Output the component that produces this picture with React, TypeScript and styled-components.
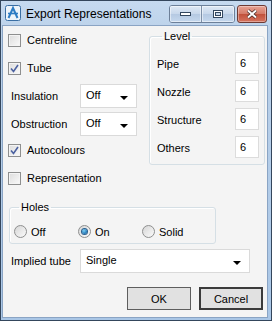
import * as React from 'react'
import styled, { createGlobalStyle } from 'styled-components'

const Global = createGlobalStyle`
  html, body {
    margin: 0;
    padding: 0;
    background: #ffffff;
  }
  * {
    box-sizing: border-box;
  }
`

// window frame
const Window = styled.div`
  width: 272px;
  height: 321px;
  border: 1px solid #34465c;
  background: linear-gradient(#c6daf0, #bcd2ea 30px, #a9c6e6);
  display: flex;
  flex-direction: column;
  font-family: "Liberation Sans", Arial, sans-serif;
  font-size: 11px;
  color: #000;
`

const TitleBar = styled.div`
  height: 24px;
  display: flex;
  align-items: center;
  padding: 0 4px 0 4px;
`

const TitleText = styled.div`
  font-size: 12px;
  margin-left: 5px;
  flex: 1;
  color: #000;
  padding-top: 1px;
`

const CaptionGroup = styled.div`
  display: flex;
  align-self: flex-start;
  margin-top: 4px;
  gap: 2px;
`

const CaptionPair = styled.div`
  display: flex;
  border: 1px solid #6d8099;
  border-radius: 3px;
  overflow: hidden;
  height: 18px;
`

const CaptionButton = styled.div<{ $w: number; $sep?: boolean }>`
  width: ${(p) => p.$w}px;
  height: 100%;
  display: flex;
  align-items: center;
  justify-content: center;
  background: linear-gradient(#dfe9f5, #c7d7eb 50%, #b5c9e2 51%, #c5d8ee);
  border-left: ${(p) => (p.$sep ? '1px solid #7d90a8' : 'none')};
  box-shadow: inset 0 0 0 1px rgba(255, 255, 255, 0.5);
`

const CloseButton = styled.div`
  width: 30px;
  height: 18px;
  border: 1px solid #6e3a33;
  border-radius: 3px;
  display: flex;
  align-items: center;
  justify-content: center;
  background: linear-gradient(#e8a394, #d47a67 50%, #c1513b 51%, #d5735e);
  box-shadow: inset 0 0 0 1px rgba(255, 255, 255, 0.35);
`

const Client = styled.div`
  flex: 1;
  margin: 0 3px 2px 1px;
  background: #f4f4f4;
  border: 1px solid #8aa4c4;
  display: flex;
  flex-direction: column;
  padding: 0 0 0 5px;
`

const TopSection = styled.div`
  display: flex;
  align-items: flex-start;
`

const LeftColumn = styled.div`
  width: 138px;
  display: flex;
  flex-direction: column;
`

const Row = styled.div<{ $h: number; $indent?: number }>`
  height: ${(p) => p.$h}px;
  display: flex;
  align-items: center;
  padding-left: ${(p) => p.$indent || 0}px;
`

const Label = styled.span<{ $w?: number }>`
  display: inline-block;
  width: ${(p) => (p.$w ? `${p.$w}px` : 'auto')};
  white-space: nowrap;
`

const Box = styled.span`
  width: 13px;
  height: 13px;
  border: 1px solid #8e8f8f;
  background: linear-gradient(135deg, #dcdcdc, #fafafa);
  box-shadow: inset 0 0 0 1px #f4f4f4;
  display: inline-flex;
  align-items: center;
  justify-content: center;
  margin-right: 6px;
  flex-shrink: 0;
`

const Round = styled.span`
  width: 13px;
  height: 13px;
  border-radius: 50%;
  border: 1px solid #8e8f8f;
  background: linear-gradient(135deg, #d6d6d6, #fbfbfb);
  display: inline-flex;
  align-items: center;
  justify-content: center;
  margin-right: 4px;
  flex-shrink: 0;
`

const Dot = styled.span`
  width: 5px;
  height: 5px;
  border-radius: 50%;
  background: radial-gradient(circle at 40% 35%, #7fd0f5, #1b73b4 70%, #0f4f86);
  box-shadow: 0 0 0 1px #2a5f8e;
`

const Combo = styled.div<{ $w: number }>`
  width: ${(p) => p.$w}px;
  height: 24px;
  background: #fff;
  border: 1px solid #dadada;
  display: flex;
  align-items: center;
  padding: 0 8px 0 5px;
`

const ComboText = styled.span`
  flex: 1;
  margin-top: -2px;
`

const Arrow = styled.span`
  width: 0;
  height: 0;
  border-left: 4px solid transparent;
  border-right: 4px solid transparent;
  border-top: 4px solid #000;
  margin-top: 3px;
`

const Group = styled.fieldset<{ $w: number; $h: number }>`
  width: ${(p) => p.$w}px;
  height: ${(p) => p.$h}px;
  margin: 0;
  border: 1px solid #d5dfe5;
  border-radius: 3px;
  padding: 0;
  box-shadow: inset 1px 1px 0 #fff;
`

const Legend = styled.legend`
  padding: 0 2px;
  margin-left: 5px;
  font-size: 11px;
  line-height: 11px;
`

const LevelGroup = styled(Group)`
  margin-left: 3px;
  margin-top: 5px;
  display: flex;
  flex-direction: column;
  padding: 8px 5px 0 7px;
`

const LevelRow = styled.div`
  height: 28px;
  display: flex;
  align-items: center;
  justify-content: space-between;
`

const NumberBox = styled.div`
  width: 24px;
  height: 22px;
  background: #fff;
  border: 1px solid #dcdcdc;
  display: flex;
  align-items: center;
  padding-left: 4px;
  margin-top: -2px;
`

const HolesGroup = styled(Group)`
  margin-left: 1px;
  margin-top: 8px;
  display: flex;
  align-items: flex-start;
  padding: 12px 0 0 4px;
`

const RadioItem = styled.label`
  width: 64px;
  display: flex;
  align-items: center;
`

const ButtonBar = styled.div`
  display: flex;
  justify-content: flex-end;
  gap: 8px;
  margin-top: 12px;
  padding-right: 4px;
`

const Button = styled.div<{ $default?: boolean }>`
  width: 64px;
  height: 23px;
  display: flex;
  align-items: center;
  justify-content: center;
  background: #e1e1e1;
  border: ${(p) => (p.$default ? '2px solid #3b3b3b' : '1px solid #5e5e5e')};
  font-size: 11px;
`

const AppIcon = () => (
  <svg width="16" height="16" viewBox="0 0 16 16">
    <rect x="0.5" y="0.5" width="15" height="15" rx="2" fill="#eef4fa" stroke="#3a6ea3" />
    <path d="M3.5 13 L8 3 L12.5 13" fill="none" stroke="#2d7cc4" strokeWidth="2" />
    <path d="M3 8.5 H13" stroke="#2d7cc4" strokeWidth="1.6" />
  </svg>
)

const Check = () => (
  <svg width="9" height="9" viewBox="0 0 9 9">
    <path d="M1 4.5 L3.5 7.5 L8 1" fill="none" stroke="#4b61a0" strokeWidth="1.6" />
  </svg>
)

const CheckBox: React.FC<{ checked?: boolean; label: string }> = ({ checked, label }) => (
  <>
    <Box>{checked && <Check />}</Box>
    <Label>{label}</Label>
  </>
)

const Radio: React.FC<{ checked?: boolean; label: string }> = ({ checked, label }) => (
  <RadioItem>
    <Round>{checked && <Dot />}</Round>
    <Label>{label}</Label>
  </RadioItem>
)

const levels = ['Pipe', 'Nozzle', 'Structure', 'Others']

export default function App() {
  return (
    <>
      <Global />
      <Window>
        <TitleBar>
          <AppIcon />
          <TitleText>Export Representations</TitleText>
          <CaptionGroup>
            <CaptionPair>
              <CaptionButton $w={31}>
                <svg width="11" height="4" viewBox="0 0 11 4">
                  <rect x="0.5" y="0.5" width="10" height="3" fill="#fff" stroke="#33475f" />
                </svg>
              </CaptionButton>
              <CaptionButton $w={33} $sep>
                <svg width="10" height="8" viewBox="0 0 10 8">
                  <rect x="0.5" y="0.5" width="9" height="7" fill="#fff" stroke="#33475f" />
                  <rect x="2.5" y="2.5" width="5" height="3" fill="#c9d9ec" stroke="#33475f" />
                </svg>
              </CaptionButton>
            </CaptionPair>
            <CloseButton>
              <svg width="12" height="10" viewBox="0 0 12 10">
                <path d="M2 1.5 L10 8.5 M10 1.5 L2 8.5" stroke="#3d2320" strokeWidth="3.4" />
                <path d="M2 1.5 L10 8.5 M10 1.5 L2 8.5" stroke="#fff" strokeWidth="2" />
              </svg>
            </CloseButton>
          </CaptionGroup>
        </TitleBar>
        <Client>
          <TopSection>
            <LeftColumn>
              <Row $h={28}>
                <CheckBox label="Centreline" />
              </Row>
              <Row $h={28}>
                <CheckBox checked label="Tube" />
              </Row>
              <Row $h={28} $indent={3}>
                <Label $w={69}>Insulation</Label>
                <Combo $w={57}>
                  <ComboText>Off</ComboText>
                  <Arrow />
                </Combo>
              </Row>
              <Row $h={28} $indent={3}>
                <Label $w={69}>Obstruction</Label>
                <Combo $w={57}>
                  <ComboText>Off</ComboText>
                  <Arrow />
                </Combo>
              </Row>
              <Row $h={24}>
                <CheckBox checked label="Autocolours" />
              </Row>
              <Row $h={32}>
                <CheckBox label="Representation" />
              </Row>
            </LeftColumn>
            <LevelGroup $w={116} $h={134}>
              <Legend>Level</Legend>
              {levels.map((l) => (
                <LevelRow key={l}>
                  <Label>{l}</Label>
                  <NumberBox>6</NumberBox>
                </LevelRow>
              ))}
            </LevelGroup>
          </TopSection>
          <HolesGroup $w={207} $h={42}>
            <Legend>Holes</Legend>
            <Radio label="Off" />
            <Radio checked label="On" />
            <Radio label="Solid" />
          </HolesGroup>
          <Row $h={28} $indent={3} style={{ marginTop: 3 }}>
            <Label $w={69}>Implied tube</Label>
            <Combo $w={170}>
              <ComboText>Single</ComboText>
              <Arrow />
            </Combo>
          </Row>
          <ButtonBar>
            <Button>OK</Button>
            <Button $default>Cancel</Button>
          </ButtonBar>
        </Client>
      </Window>
    </>
  )
}
